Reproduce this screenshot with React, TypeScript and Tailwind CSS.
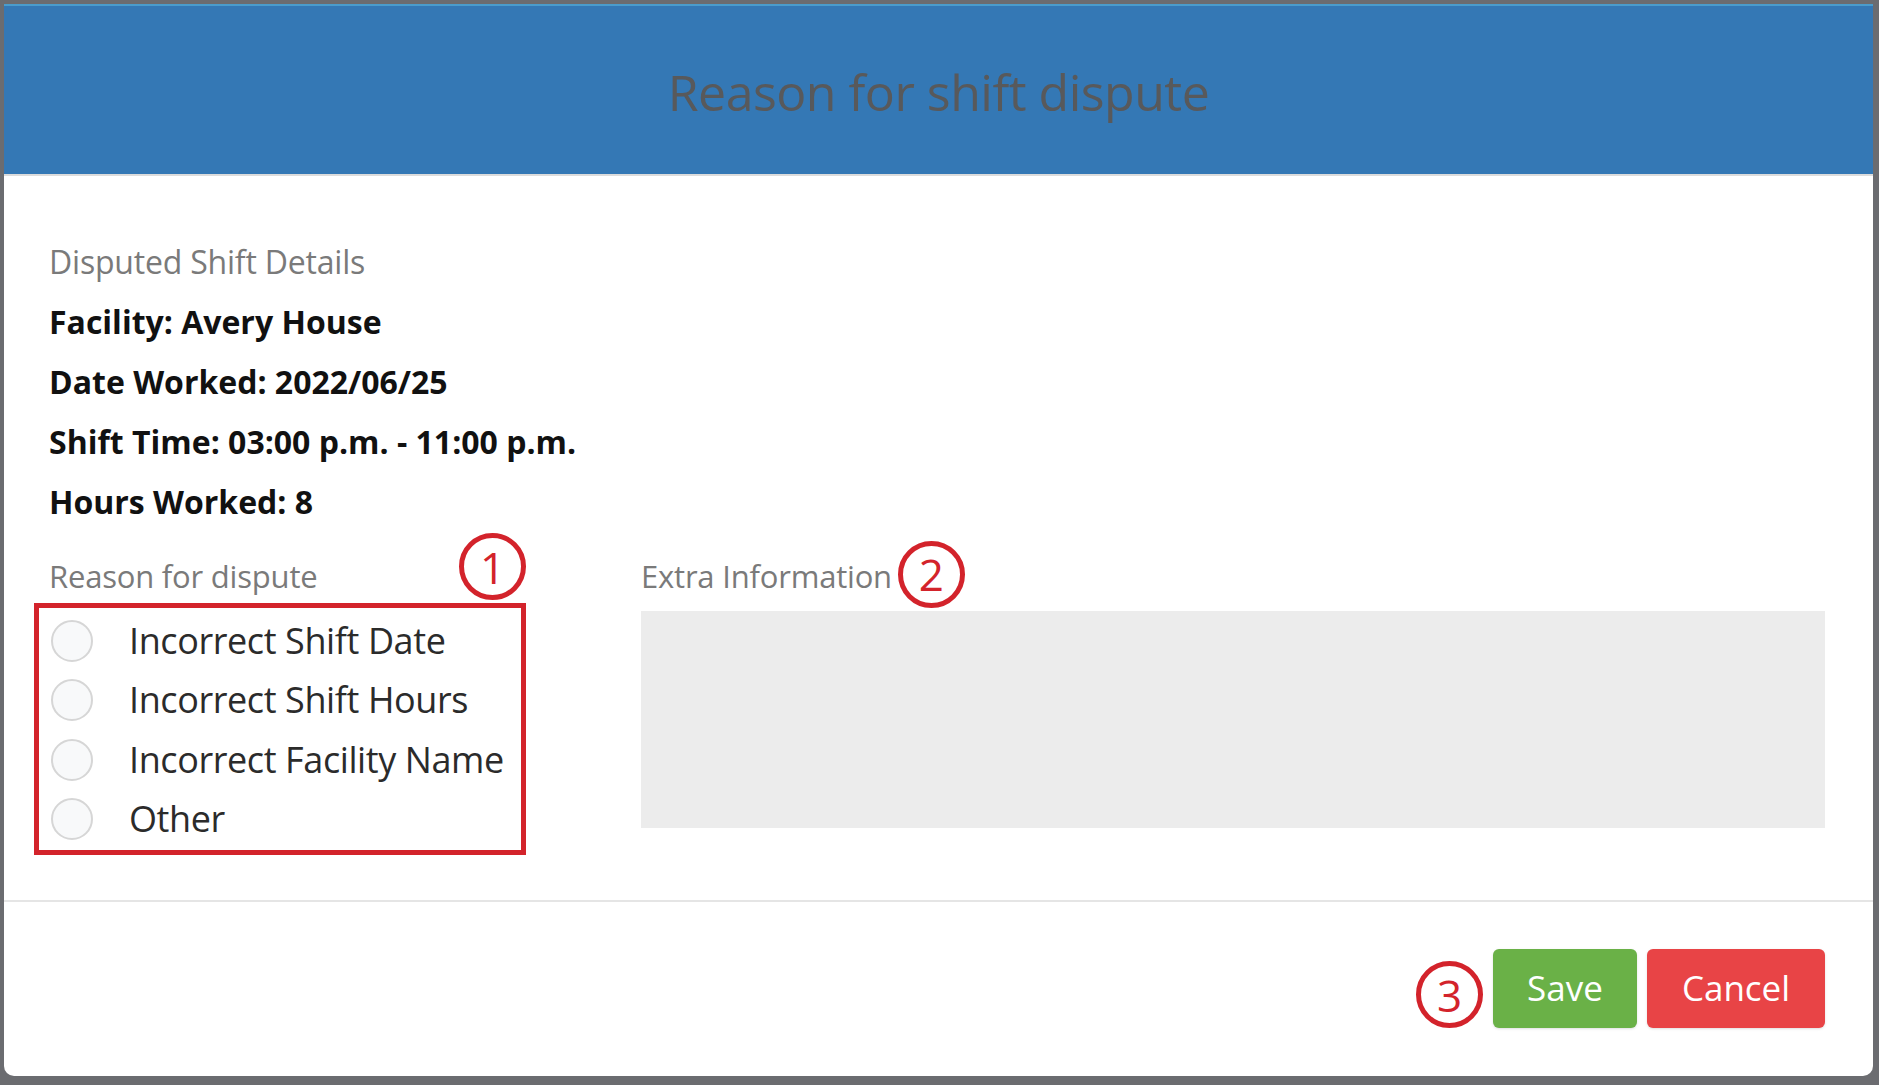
import { useState } from 'react'

const REASONS = ['Incorrect Shift Date', 'Incorrect Shift Hours', 'Incorrect Facility Name', 'Other']

const SHIFT = [
  { label: 'Facility', value: 'Avery House' },
  { label: 'Date Worked', value: '2022/06/25' },
  { label: 'Shift Time', value: '03:00 p.m. - 11:00 p.m.' },
  { label: 'Hours Worked', value: '8' },
]

function Marker({ n, className = '' }: { n: number; className?: string }) {
  return (
    <span
      className={`flex h-[67px] w-[67px] shrink-0 items-center justify-center rounded-full border-[5px] border-[#d3232b] bg-white text-[44px] font-normal leading-none text-[#d3232b] ${className}`}
    >
      {n}
    </span>
  )
}

export default function App() {
  const [reason, setReason] = useState<string | null>(null)
  const [extra, setExtra] = useState('')

  return (
    <div className="h-screen bg-[#6b6c70] pb-[9px] pl-[4px] pr-[6px] pt-[4px] font-['Open_Sans',sans-serif]">
      <div className="flex h-full flex-col overflow-hidden rounded-b-[10px] bg-white">
        <header className="flex h-[172px] shrink-0 items-center justify-center border-t-[2px] border-b-[2px] border-t-[#4a9ccc] border-b-[#dcdcdc] bg-[#3478b5] pt-[4px]">
          <h1 className="text-[50px] font-normal tracking-[-0.5px] text-[#58595b]">Reason for shift dispute</h1>
        </header>

        <section className="pb-[45px] pl-[45px] pr-[48px] pt-[56px]">
          <p className="text-[32px] leading-[60px] tracking-[-0.2px] text-[#7a7a7a]">Disputed Shift Details</p>
          {SHIFT.map((row) => (
            <p key={row.label} className="text-[32px] font-bold leading-[60px] text-[#111]">
              {row.label}: {row.value}
            </p>
          ))}

          <div className="mt-[14px] grid grid-cols-3">
            <div>
              <p className="text-[31px] leading-[60px] tracking-[-0.2px] text-[#7a7a7a]">Reason for dispute</p>
              <div className="relative -ml-[15px] mt-[-3px] w-[492px] border-[5px] border-[#d3232b] pb-[1px] pl-[12px] pt-[3px]">
                <Marker n={1} className="absolute bottom-full right-[-5px] mb-[8px]" />
                {REASONS.map((item) => (
                  <label key={item} className="flex h-[59.5px] cursor-pointer items-center gap-[36px]">
                    <input
                      type="radio"
                      name="reason"
                      checked={reason === item}
                      onChange={() => setReason(item)}
                      className="h-[42px] w-[42px] shrink-0 appearance-none rounded-full border-[2px] border-[#d6d6d6] bg-[#f8f9fa] checked:border-[#3478b5] checked:bg-[#3478b5]"
                    />
                    <span className="text-[36px] tracking-[-0.4px] text-[#2b2b2b]">{item}</span>
                  </label>
                ))}
              </div>
            </div>

            <div className="col-span-2">
              <div className="flex h-[60px] items-center">
                <p className="text-[31px] leading-[60px] tracking-[-0.2px] text-[#7a7a7a]">Extra Information</p>
                <Marker n={2} className="ml-[6px] mt-[-4px] h-[64px] w-[64px]" />
              </div>
              <textarea
                value={extra}
                onChange={(e) => setExtra(e.target.value)}
                className="mt-[5px] block h-[217px] w-full resize-none bg-[#ececec] p-3 text-[24px] outline-none"
              />
            </div>
          </div>
        </section>

        <div className="h-[2px] shrink-0 bg-[#e5e5e5]" />

        <footer className="flex items-center justify-end gap-[10px] px-[48px] pt-[47px]">
          <Marker n={3} className="mt-[12px]" />
          <button type="button" className="h-[79px] w-[144px] rounded-[6px] bg-[#6ab147] text-[35px] text-white shadow-sm">
            Save
          </button>
          <button type="button" className="h-[79px] w-[178px] rounded-[6px] bg-[#e84446] text-[35px] text-white shadow-sm">
            Cancel
          </button>
        </footer>
      </div>
    </div>
  )
}
